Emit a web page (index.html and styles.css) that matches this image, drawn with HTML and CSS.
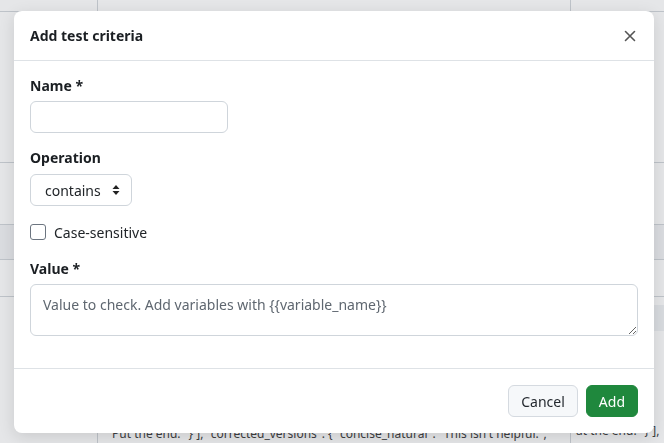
FILE: index.html
```html
<!DOCTYPE html>
<html lang="en">

<head>
    <meta charset="UTF-8">
    <meta name="viewport" content="width=device-width, initial-scale=1.0">
    <title>Test criteria</title>
    <link rel="stylesheet" href="styles.css">
</head>

<body>
    <!-- page behind the dialog -->
    <div class="page">
        <div class="row row-head">
            <div class="cell c1"></div>
            <div class="cell c2"></div>
            <div class="cell c3"></div>
        </div>
        <div class="row row-a">
            <div class="cell c1"></div>
            <div class="cell c2"></div>
            <div class="cell c3">
                <p class="gap-top">GPT</p>
                <p class="gap-mid">per<br>g<br>ric</p>
            </div>
        </div>
        <div class="row row-b">
            <div class="cell c1"></div>
            <div class="cell c2"></div>
            <div class="cell c3"></div>
        </div>
        <div class="row row-c">
            <div class="cell c1"></div>
            <div class="cell c2"></div>
            <div class="cell c3"></div>
        </div>
        <div class="row row-d">
            <div class="cell c1"></div>
            <div class="cell c2"></div>
            <div class="cell c3"></div>
        </div>
        <div class="row row-e">
            <div class="cell c1"></div>
            <div class="cell c2">
                <p class="tail">Put the end." } ], "corrected_versions": { "concise_natural": "This isn't helpful.",</p>
            </div>
            <div class="cell c3">
                <p class="pass">Pass</p>
                <p class="muted">2m</p>
                <p class="lines">nte<br>ell<br>elp<br>at the end." } ],</p>
            </div>
        </div>
    </div>

    <div class="backdrop"></div>

    <!-- dialog -->
    <div class="modal">
        <div class="modal-header">
            <h5 class="modal-title">Add test criteria</h5>
            <button class="close-btn" aria-label="Close">
                <svg width="12" height="12" viewBox="0 0 12 12">
                    <path d="M1.5 1.5 L10.5 10.5 M10.5 1.5 L1.5 10.5" stroke="#555" stroke-width="1.6" stroke-linecap="round" fill="none" />
                </svg>
            </button>
        </div>

        <div class="modal-body">
            <label class="form-label" for="name">Name *</label>
            <input class="form-input name-input" id="name" type="text">

            <label class="form-label op-label" for="op">Operation</label>
            <div class="select">
                <span>contains</span>
                <svg width="8" height="12" viewBox="0 0 8 12">
                    <path d="M4 1 L7.5 5 L0.5 5 Z M4 11 L7.5 7 L0.5 7 Z" fill="#222" />
                </svg>
            </div>

            <div class="check-row">
                <span class="checkbox"></span>
                <span>Case-sensitive</span>
            </div>

            <label class="form-label" for="value">Value *</label>
            <textarea class="form-input value-input" id="value" placeholder="Value to check. Add variables with {{variable_name}}"></textarea>
        </div>

        <div class="modal-footer">
            <button class="btn btn-light">Cancel</button>
            <button class="btn btn-green">Add</button>
        </div>
    </div>
</body>

</html>
```

FILE: styles.css
```css
 body {
     font-family: "Noto Sans", "Open Sans", sans-serif;
     margin: 0;
     padding: 0;
     background-color: #ffffff;
     color: #212529;
     overflow: hidden;
 }

 /* background page */

 .page {
     font-size: 13px;
     color: #444;
 }

 .row {
     display: flex;
     border-bottom: 1px solid #d4d8dd;
 }

 .cell {
     border-right: 1px solid #d4d8dd;
     overflow: hidden;
 }

 .cell p {
     margin: 0;
 }

 .c1 {
     width: 97px;
 }

 .c2 {
     width: 472px;
 }

 .c3 {
     flex: 1;
     padding-left: 5px;
     border-right: none;
 }

 .row-head {
     height: 11px;
 }

 .row-a {
     height: 150px;
 }

 .row-b {
     height: 61px;
 }

 .row-c {
     height: 34px;
     background-color: #f3f4f6;
 }

 .row-d {
     height: 36px;
 }

 .row-e {
     height: 160px;
 }

 .gap-top {
     padding-top: 13px;
 }

 .gap-mid {
     padding-top: 46px;
     line-height: 20px;
 }

 .pass {
     margin-top: 8px !important;
     padding: 4px 0;
     background-color: #f1f3f5;
     color: #2f8a4f;
     font-weight: bold;
 }

 .muted {
     padding-top: 6px;
     color: #666;
 }

 .lines {
     padding-top: 6px;
     line-height: 20px;
     font-size: 12px;
 }

 .tail {
     padding-top: 128px;
     padding-left: 14px;
     font-size: 12px;
     white-space: nowrap;
 }

 .backdrop {
     position: fixed;
     inset: 0;
     background-color: rgba(20, 30, 45, 0.11);
 }

 /* dialog */

 .modal {
     position: fixed;
     left: 14px;
     top: 11px;
     width: 640px;
     height: 422px;
     background-color: white;
     border-radius: 8px;
     box-shadow: 0 4px 16px rgba(0, 0, 0, 0.12);
     display: flex;
     flex-direction: column;
 }

 .modal-header {
     display: flex;
     align-items: center;
     justify-content: space-between;
     height: 49px;
     padding: 0 16px;
     border-bottom: 1px solid #dee2e6;
 }

 .modal-title {
     margin: 0;
     font-size: 14px;
     font-weight: bold;
     color: #1b1f23;
 }

 .close-btn {
     border: none;
     background: none;
     padding: 0;
     margin-right: 2px;
     display: flex;
     cursor: pointer;
 }

 .modal-body {
     flex: 1;
     padding: 15px 16px 0 16px;
     display: flex;
     flex-direction: column;
     align-items: flex-start;
 }

 .form-label {
     font-size: 14px;
     font-weight: bold;
     line-height: 20px;
     color: #1b1f23;
     margin-bottom: 5px;
 }

 .op-label {
     margin-top: 15px;
     margin-bottom: 6px;
 }

 .form-input {
     box-sizing: border-box;
     border: 1px solid #cfd5db;
     border-radius: 6px;
     font-family: inherit;
     font-size: 14px;
     color: #212529;
 }

 .name-input {
     width: 198px;
     height: 32px;
     padding: 0 12px;
 }

 .value-input {
     width: 608px;
     height: 52px;
     padding: 10px 12px;
     line-height: 20px;
 }

 .value-input::placeholder {
     color: #5f6770;
 }

 .select {
     box-sizing: border-box;
     display: flex;
     align-items: center;
     justify-content: space-between;
     width: 102px;
     height: 32px;
     padding: 0 11px 0 14px;
     border: 1px solid #cfd5db;
     border-radius: 6px;
     font-size: 14px;
 }

 .check-row {
     display: flex;
     align-items: center;
     gap: 8px;
     margin: 16px 0 17px 0;
     height: 20px;
     font-size: 14px;
 }

 .checkbox {
     box-sizing: border-box;
     width: 16px;
     height: 16px;
     border: 1px solid #6c7580;
     border-radius: 3px;
 }

 .modal-footer {
     display: flex;
     justify-content: flex-end;
     gap: 8px;
     padding: 16px 16px 16px 16px;
     border-top: 1px solid #dee2e6;
 }

 .btn {
     font-family: inherit;
     font-size: 14px;
     height: 32px;
     padding: 0 12px;
     border-radius: 6px;
     cursor: pointer;
 }

 .btn-light {
     background-color: #f6f8fa;
     border: 1px solid #d5dae0;
     color: #24292f;
 }

 .btn-green {
     background-color: #1f883d;
     border: 1px solid #1f883d;
     color: white;
     padding: 0 12px;
 }
```
